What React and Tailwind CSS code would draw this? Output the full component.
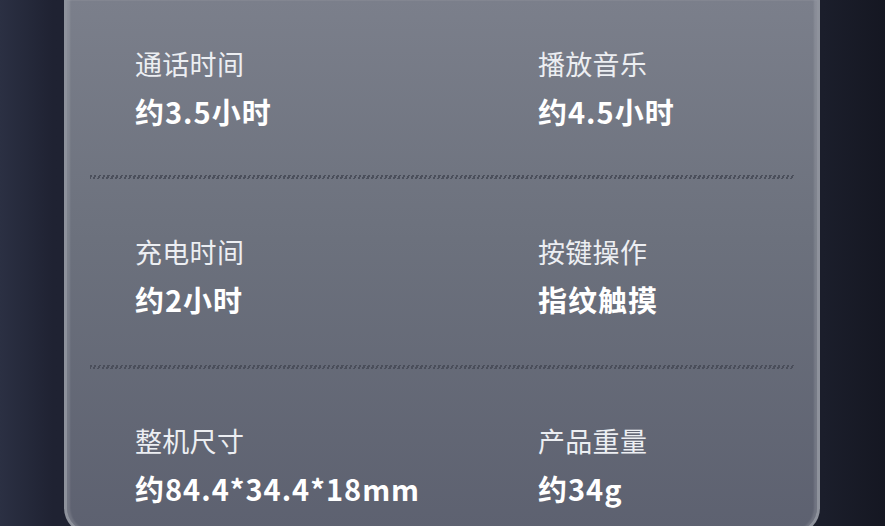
export default function App() {
  const font = { fontFamily: '"Noto Sans CJK SC", "Noto Sans", sans-serif' };
  const rows = [
    { a: ["通话时间", "约3.5小时"], b: ["播放音乐", "约4.5小时"], cls: "pt-[46px] pb-[44px]" },
    { a: ["充电时间", "约2小时"], b: ["按键操作", "指纹触摸"], cls: "pt-[55px] pb-[46px]" },
    { a: ["整机尺寸", "约84.4*34.4*18mm"], b: ["产品重量", "约34g"], cls: "pt-[54px] pb-[30px]" },
  ];
  const Cell = ({ d }) => (
    <div className="flex flex-col">
      <div className="h-[36px] leading-[36px] text-[27px] text-[#eceef2] tracking-[0.3px]">{d[0]}</div>
      <div className="mt-[9px] h-[40px] leading-[40px] text-[29px] font-bold text-white tracking-[1px]">{d[1]}</div>
    </div>
  );
  return (
    <div
      className="w-[885px] h-[526px] overflow-hidden flex bg-[linear-gradient(90deg,#2b3043_0%,#1f2232_6%,#1b1e2b_93%,#151722_100%)]"
      style={font}
    >
      <div className="ml-[64px] w-[756px] h-[534px] shrink-0 rounded-b-[26px] border-x-[3px] border-b-[3px] border-[#8e929c] bg-[linear-gradient(180deg,#7b7f8b_0%,#6c717d_45%,#5d6170_100%)] shadow-[inset_3px_0_2px_rgba(255,255,255,0.12),inset_-3px_0_2px_rgba(255,255,255,0.12)]">
        {rows.map((r, i) => (
          <div key={i}>
            <div className={`grid grid-cols-[403px_1fr] pl-[68px] ${r.cls}`}>
              <Cell d={r.a} />
              <Cell d={r.b} />
            </div>
            {i < 2 && (
              <div className="ml-[23px] w-[705px] h-[4px] bg-[repeating-linear-gradient(115deg,#474b57_0px,#474b57_2px,transparent_2px,transparent_4px)] opacity-90" />
            )}
          </div>
        ))}
      </div>
    </div>
  );
}
